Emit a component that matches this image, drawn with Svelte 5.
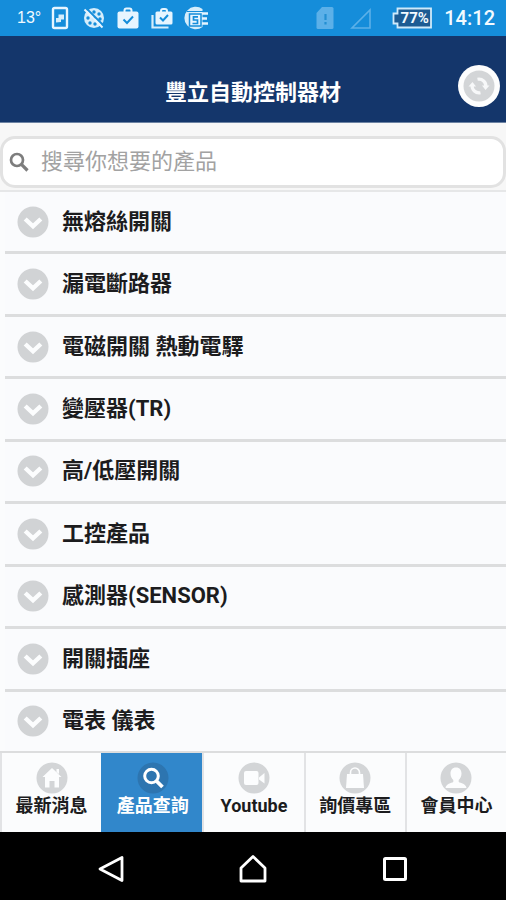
<script>
  const categories = [
    '無熔絲開關',
    '漏電斷路器',
    '電磁開關 熱動電驛',
    '變壓器(TR)',
    '高/低壓開關',
    '工控產品',
    '感測器(SENSOR)',
    '開關插座',
    '電表 儀表'
  ];

  const tabs = [
    { id: 'news', label: '最新消息' },
    { id: 'search', label: '產品查詢' },
    { id: 'video', label: 'Youtube' },
    { id: 'quote', label: '詢價專區' },
    { id: 'member', label: '會員中心' }
  ];

  let active = $state('search');
  let query = $state('');
</script>

<div class="screen">
  <div class="status">
    <div class="notices">
      <span class="temp">13°</span>
      <svg width="24" height="24" viewBox="0 0 24 24" aria-hidden="true">
        <rect x="5" y="2" width="14" height="20" rx="1.500" fill="none" stroke="#e6f5ff" stroke-width="2.400" />
        <path d="M10.500 8.500H16v5h-3v2.500l-5 .5v-4.500h2.500z" fill="#d5edfb" />
      </svg>
      <svg width="24" height="24" viewBox="0 0 24 24" aria-hidden="true">
        <circle cx="12" cy="12" r="10" fill="#d5edfb" />
        <g fill="#158dda">
          <circle cx="12" cy="6" r="1.700" /><circle cx="17" cy="8" r="1.700" />
          <circle cx="18" cy="13" r="1.700" /><circle cx="6" cy="12" r="1.700" />
          <circle cx="8" cy="17" r="1.700" /><circle cx="13" cy="18" r="1.700" />
          <circle cx="12" cy="12" r="1.500" />
        </g>
        <path d="M4.500 2.500l17 17" stroke="#158dda" stroke-width="2" />
        <path d="M2.500 3.500l18 18" stroke="#e6f5ff" stroke-width="2" />
      </svg>
      <svg width="24" height="24" viewBox="0 0 24 24" aria-hidden="true">
        <path d="M8.500 6V4.500a2 2 0 0 1 2-2h3a2 2 0 0 1 2 2V6" fill="none" stroke="#e6f5ff" stroke-width="2" />
        <rect x="1.500" y="5.500" width="21" height="17" rx="2" fill="#e6f5ff" />
        <path d="M7.500 13.500l3.500 3.500 6-6.500" fill="none" stroke="#158dda" stroke-width="2" />
      </svg>
      <svg width="24" height="24" viewBox="0 0 24 24" aria-hidden="true">
        <path d="M2.500 9v12.500h16" fill="none" stroke="#d5edfb" stroke-width="2.200" />
        <path d="M11 6V5a2 2 0 0 1 2-2h2a2 2 0 0 1 2 2v1" fill="none" stroke="#e6f5ff" stroke-width="2" />
        <rect x="5.500" y="5.500" width="17" height="13" rx="1.500" fill="#e6f5ff" />
        <path d="M10 11.500l3 3 5-5.500" fill="none" stroke="#158dda" stroke-width="2" />
      </svg>
      <svg width="24" height="24" viewBox="0 0 24 24" aria-hidden="true">
        <path d="M18.500 3A11.300 11.300 0 1 0 18.500 21" fill="#d5edfb" />
        <path d="M3 5.500h18" stroke="#158dda" stroke-width="1" />
        <path d="M12 7.500h12M16 12.500h7M16 17.500h8" stroke="#e6f5ff" stroke-width="2.500" />
        <rect x="5.500" y="8" width="11.500" height="12" fill="#e6f5ff" stroke="#158dda" stroke-width="1.500" />
        <path d="M14 10.800H9.500v3.200h4v3.500H8.500" fill="none" stroke="#158dda" stroke-width="1.700" />
      </svg>
    </div>
    <div class="system">
      <svg width="18" height="24" viewBox="0 0 18 24" aria-hidden="true">
        <path d="M6 1h10a1.500 1.500 0 0 1 1.500 1.500v19a1.500 1.500 0 0 1-1.500 1.500H2a1.500 1.500 0 0 1-1.500-1.500V7z" fill="#5cb0e8" />
        <path d="M9.500 8v6M9.500 16v2.500" stroke="#238fd2" stroke-width="2.200" />
      </svg>
      <svg width="22" height="24" viewBox="0 0 22 24" aria-hidden="true">
        <path d="M20 4v18H2z" fill="none" stroke="#5cb0e8" stroke-width="1.600" />
      </svg>
      <span class="battery">
        <svg width="40" height="22" viewBox="0 0 40 22" aria-hidden="true">
          <path d="M5.500 1.500H39v19H5.500v-4H1.500v-10h4z" fill="#1d5c93" stroke="#cfeafa" stroke-width="1.800" />
        </svg>
        <span class="level">77%</span>
      </span>
      <span class="clock">14:12</span>
    </div>
  </div>

  <header>
    <h1>豐立自動控制器材</h1>
    <button class="refresh" aria-label="重新整理">
      <svg width="34" height="34" viewBox="0 0 34 34" aria-hidden="true">
        <circle cx="17" cy="17" r="15.500" fill="#d3d5d7" />
        <g fill="none" stroke="#f7f8f9" stroke-width="3.200">
          <path d="M15.500 10.200a7 7 0 0 1 8.300 7.800" />
          <path d="M18.500 23.800a7 7 0 0 1-8.300-7.800" />
        </g>
        <path d="M20 16.500h7.500l-4 4.500zM6.500 17.500h7.500l-3.500-4.500z" fill="#f7f8f9" />
      </svg>
    </button>
  </header>

  <main>
    <div class="searchrow">
      <label class="search">
        <svg width="20" height="20" viewBox="0 0 20 20" aria-hidden="true">
          <circle cx="8" cy="8" r="6" fill="none" stroke="#7d7d7d" stroke-width="2.700" />
          <path d="M12.200 12.200l6.300 6.300" stroke="#7d7d7d" stroke-width="3.200" />
        </svg>
        <input type="text" placeholder="搜尋你想要的產品" aria-label="搜尋你想要的產品" bind:value={query} />
      </label>
    </div>

    <ul class="list">
      {#each categories as name}
        <li>
          <button class="row">
            <svg width="32" height="32" viewBox="0 0 32 32" aria-hidden="true">
              <circle cx="16" cy="16" r="15.500" fill="#d1d3d5" />
              <path d="M8.200 13l7.800 7.300 7.800-7.300" fill="none" stroke="#fcfdfe" stroke-width="4.400" />
            </svg>
            <span>{name}</span>
          </button>
        </li>
      {/each}
    </ul>
  </main>

  <nav class="tabs">
    {#each tabs as tab}
      <button class="tab" class:active={active === tab.id} onclick={() => (active = tab.id)}>
        <svg width="32" height="32" viewBox="0 0 32 32" aria-hidden="true">
          <circle class="disc" cx="16" cy="16" r="15.500" />
          {#if tab.id === 'news'}
            <path d="M16 6l9.500 9H23v10.500h-4.500V19h-5v6.500H9V15H6.500zM20.500 7H23v5l-2.500-2z" fill="#fcfdfe" />
          {:else if tab.id === 'search'}
            <circle cx="14.500" cy="14" r="6.800" fill="none" stroke="#fff" stroke-width="3" />
            <path d="M19.500 19l6 6" stroke="#fff" stroke-width="3.800" />
          {:else if tab.id === 'video'}
            <rect x="6" y="9" width="14.500" height="14" rx="2" fill="#fcfdfe" />
            <path d="M21 15.500l5.500-4.500v10.500L21 17.500z" fill="#fcfdfe" />
          {:else if tab.id === 'quote'}
            <path d="M11.500 13v-2.500a4.500 4.500 0 0 1 9 0V13" fill="none" stroke="#fcfdfe" stroke-width="1.600" />
            <path d="M8 12h16l1 14H7z" fill="#fcfdfe" />
          {:else}
            <path d="M16 5.500c3.800 0 5.500 2.700 5.500 6 0 3-1.200 5-2.800 6.500v2c2 1.200 7.300 1.800 7.800 6h-21c.5-4.200 5.800-4.800 7.800-6v-2c-1.600-1.500-2.800-3.500-2.800-6.500 0-3.300 1.700-6 5.500-6z" fill="#fcfdfe" />
          {/if}
        </svg>
        <span>{tab.label}</span>
      </button>
    {/each}
  </nav>

  <div class="system-nav">
    <button aria-label="返回">
      <svg width="28" height="28" viewBox="0 0 28 28" aria-hidden="true">
        <path d="M25 2.500v23L3 14z" fill="none" stroke="#fff" stroke-width="2.800" stroke-linejoin="round" />
      </svg>
    </button>
    <button aria-label="主畫面">
      <svg width="28" height="28" viewBox="0 0 28 28" aria-hidden="true">
        <path d="M14 1.500l12 11.500v13H2V13z" fill="none" stroke="#fff" stroke-width="2.800" stroke-linejoin="round" />
      </svg>
    </button>
    <button aria-label="最近使用">
      <svg width="28" height="28" viewBox="0 0 28 28" aria-hidden="true">
        <rect x="3.500" y="3.500" width="21" height="21" rx="1" fill="none" stroke="#fff" stroke-width="3" />
      </svg>
    </button>
  </div>
</div>

<style>
  :global(body) {
    margin: 0;
  }

  .screen {
    display: flex;
    flex-direction: column;
    min-height: 100vh;
    background: #fbfcfd;
    color: #1c1c1e;
    font-family: Roboto, 'Noto Sans CJK TC', sans-serif;
  }

  svg {
    display: block;
    flex: none;
  }

  button {
    margin: 0;
    padding: 0;
    border: 0;
    background: none;
    color: inherit;
    font: inherit;
    cursor: pointer;
  }

  .status {
    display: flex;
    align-items: center;
    justify-content: space-between;
    height: 36px;
    padding: 0 11px 0 17px;
    background: #158dda;
    color: #f2faff;
  }

  .notices {
    display: flex;
    align-items: center;
    gap: 10px;
  }

  .temp {
    width: 21px;
    font-family: 'Liberation Sans Narrow', 'Liberation Sans', sans-serif;
    font-size: 16px;
    line-height: 20px;
    white-space: nowrap;
  }

  .system {
    display: flex;
    align-items: center;
    gap: 12px;
  }

  .system > svg:first-child {
    margin-right: 4px;
  }

  .battery {
    position: relative;
    margin-left: 8px;
  }

  .level {
    position: absolute;
    inset: 0 0 0 5px;
    font-size: 15px;
    font-weight: 700;
    line-height: 22px;
    text-align: center;
  }

  .clock {
    font-size: 20px;
    font-weight: 500;
    line-height: 24px;
  }

  header {
    position: relative;
    box-sizing: border-box;
    height: 87px;
    padding-top: 41px;
    border-bottom: 1px solid #6d83a3;
    background: #14366b;
  }

  h1 {
    margin: 0;
    color: #fff;
    font-size: 22px;
    font-weight: 700;
    line-height: 32px;
    text-align: center;
  }

  .refresh {
    position: absolute;
    top: 29px;
    right: 6px;
    display: grid;
    place-items: center;
    width: 42px;
    height: 42px;
    border-radius: 50%;
    background: #fdfdfd;
  }

  main {
    display: flex;
    flex: 1;
    flex-direction: column;
  }

  .searchrow {
    padding: 13px 0 2px;
    background: #f7f7f7;
  }

  .search {
    display: flex;
    align-items: center;
    gap: 8px;
    box-sizing: border-box;
    height: 52px;
    padding: 0 6px;
    border: 3px solid #e2e2e2;
    border-radius: 15px;
    background: #fff;
  }

  .search input {
    flex: 1;
    min-width: 0;
    padding: 0 4px;
    border: 0;
    outline: 0;
    background: none;
    color: #333;
    font: inherit;
    font-size: 22px;
    line-height: 32px;
  }

  .search input::placeholder {
    color: #a2a2a2;
    opacity: 1;
  }

  .list {
    display: flex;
    flex: 1;
    flex-direction: column;
    margin: 0;
    padding: 0 0 0 5px;
    border-top: 2px solid #e6e7e8;
    list-style: none;
  }

  li {
    display: flex;
    flex: 1;
    min-height: 48px;
    border-bottom: 3px solid #dcddde;
    background: #fafbfd;
  }

  li:last-child {
    border-bottom: 0;
  }

  .row {
    display: flex;
    flex: 1;
    align-items: center;
    gap: 13px;
    padding-left: 12px;
    font-size: 22px;
    font-weight: 700;
    line-height: 32px;
    text-align: left;
  }

  .tabs {
    display: grid;
    grid-template-columns: repeat(5, 1fr);
    border-top: 2px solid #dcddde;
  }

  .tab {
    display: flex;
    flex-direction: column;
    align-items: center;
    height: 79px;
    padding-top: 9px;
    border-left: 2px solid #e2e3e5;
    font-size: 18px;
    font-weight: 700;
    line-height: 24px;
  }

  .tab.active {
    border-color: #3187cb;
    background: #3187cb;
    color: #fff;
  }

  .disc {
    fill: #d3d5d7;
  }

  .active .disc {
    fill: #2d75b0;
  }

  .system-nav {
    display: grid;
    grid-template-columns: repeat(3, 1fr);
    height: 68px;
    padding: 5px 8% 0;
    box-sizing: border-box;
    background: #000;
  }

  .system-nav button {
    display: grid;
    place-items: center;
  }
</style>
